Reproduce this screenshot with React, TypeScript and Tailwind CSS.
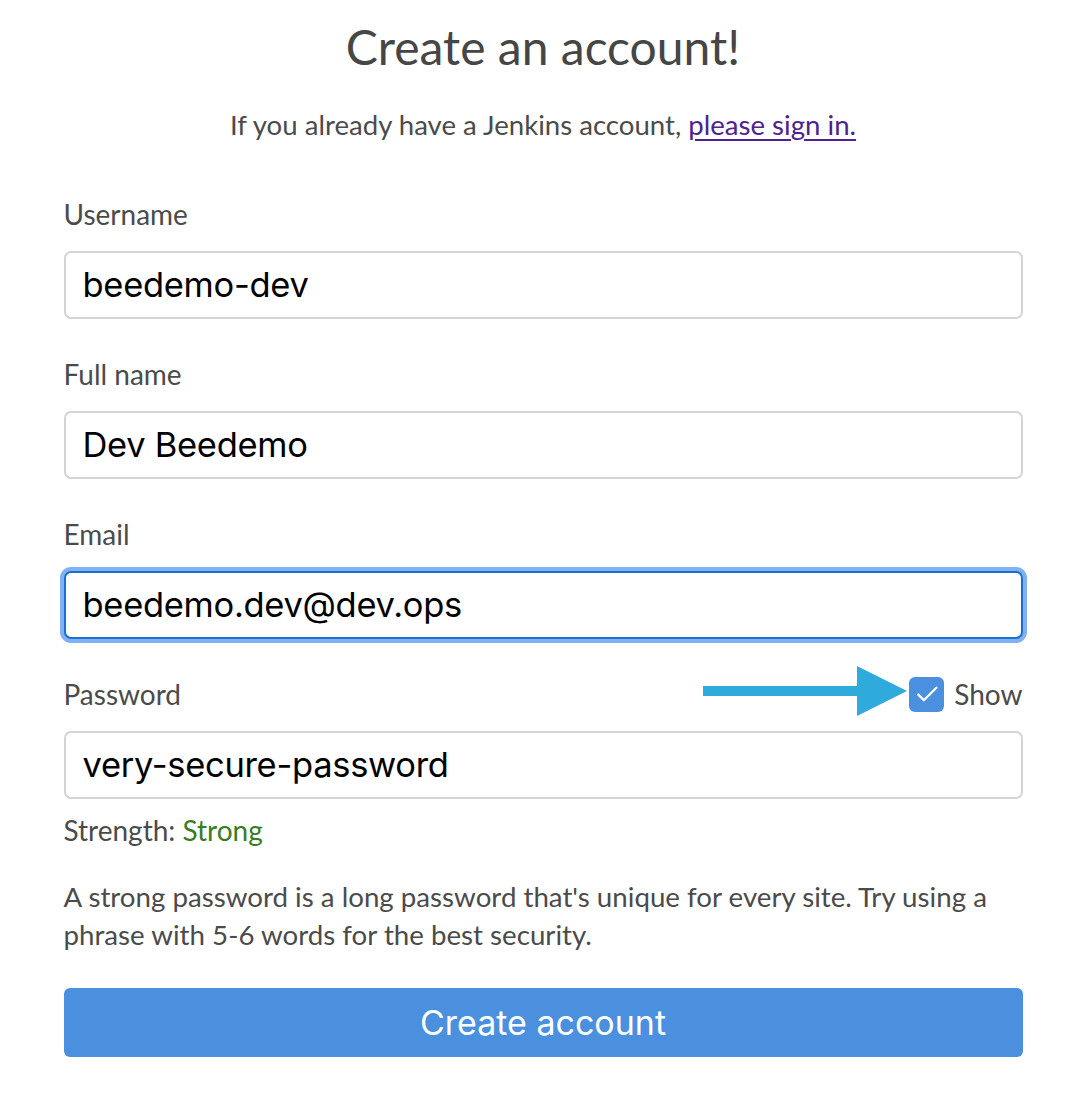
const labelFont = { fontFamily: "Lato, 'Noto Sans', sans-serif" };

type FieldProps = {
  label: string;
  value: string;
  focused?: boolean;
  right?: JSX.Element;
};

const Field = ({ label, value, focused, right }: FieldProps) => {
  return (
    <div className="flex flex-col">
      <div className="flex items-center justify-between h-[36px] mb-[19px]">
        <span className="text-[28px] text-[#4b4b4b]">{label}</span>
        {right}
      </div>
      <div
        className={
          focused
            ? "h-[68px] rounded-[7px] border-2 border-[#1b6fcf] ring-[4px] ring-[#7fb2f2] bg-white flex items-center px-[17px]"
            : "h-[68px] rounded-[7px] border-2 border-[#d4d4d4] bg-white flex items-center px-[17px]"
        }
      >
        <span className="text-[34.5px] text-black font-[Inter,'Liberation_Sans',sans-serif] tracking-[-0.3px]">
          {value}
        </span>
      </div>
    </div>
  );
};

const ShowToggle = () => {
  return (
    <div className="relative flex items-center gap-[10px]">
      <svg
        className="absolute left-[-206px] top-[-7px]"
        width="206"
        height="50"
        viewBox="0 0 206 50"
      >
        <rect x="0" y="20" width="160" height="10" fill="#2eabdc" />
        <polygon points="154,0 204,25 154,50" fill="#2eabdc" />
      </svg>
      <div className="w-[35px] h-[35px] rounded-[6px] bg-[#4a90df] flex items-center justify-center">
        <svg width="30" height="30" viewBox="0 0 24 24" fill="none">
          <path d="M5 12.5l4.5 4.5L19.5 7" stroke="white" strokeWidth="1.9" strokeLinecap="round" strokeLinejoin="round" />
        </svg>
      </div>
      <span className="text-[28px] text-[#4b4b4b]">Show</span>
    </div>
  );
};

export default function App() {
  return (
    <div className="min-h-[1100px] bg-white" style={labelFont}>
      <div className="w-[959px] mx-auto flex flex-col pt-[14px]">
        <h1 className="text-center text-[48px] leading-[66px] text-[#464646] font-normal">
          Create an account!
        </h1>
        <p className="text-center text-[27.6px] leading-[36px] text-[#4b4b4b] mt-[27px]">
          If you already have a Jenkins account,{" "}
          <a href="#" className="text-[#4e2390] underline underline-offset-[4px]">
            please sign in.
          </a>
        </p>
        <div className="flex flex-col gap-[37px] mt-[53px]">
          <Field label="Username" value="beedemo-dev" />
          <Field label="Full name" value="Dev Beedemo" />
          <Field label="Email" value="beedemo.dev@dev.ops" focused />
          <div className="flex flex-col">
            <Field label="Password" value="very-secure-password" right={<ShowToggle />} />
            <div className="text-[28px] leading-[36px] text-[#4b4b4b] mt-[13px]">
              Strength: <span className="text-[#3a7d1e]">Strong</span>
            </div>
            <p className="text-[27.7px] leading-[38px] text-[#4b4b4b] mt-[30px]">
              A strong password is a long password that's unique for every site. Try using a
              phrase with 5-6 words for the best security.
            </p>
            <button className="mt-[34px] h-[69px] rounded-[6px] bg-[#4a90df] text-white text-[34px] font-[Inter,'Liberation_Sans',sans-serif]">
              Create account
            </button>
          </div>
        </div>
      </div>
    </div>
  );
}
